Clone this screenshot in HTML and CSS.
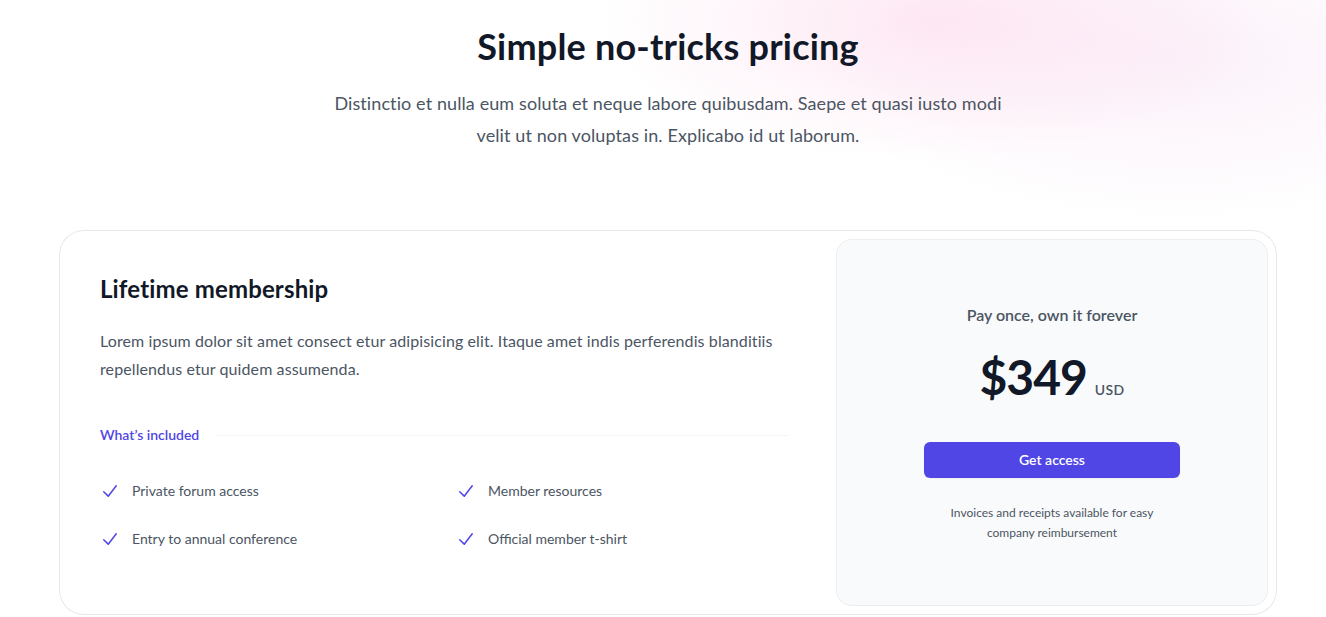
FILE: index.html
```html
<!DOCTYPE html>
<html lang="en">
<head>
<meta charset="utf-8">
<title>Pricing</title>
<link rel="stylesheet" href="styles.css">
</head>
<body>
<div class="page">
  <header class="intro">
    <h2 class="title">Simple no-tricks pricing</h2>
    <p class="lead">Distinctio et nulla eum soluta et neque labore quibusdam. Saepe et quasi iusto modi velit ut non voluptas in. Explicabo id ut laborum.</p>
  </header>
  <div class="card">
    <div class="details">
      <h3 class="plan">Lifetime membership</h3>
      <p class="desc">Lorem ipsum dolor sit amet consect etur adipisicing elit. Itaque amet indis perferendis blanditiis repellendus etur quidem assumenda.</p>
      <div class="included">
        <h4 class="included-label">What’s included</h4>
        <div class="rule"></div>
      </div>
      <ul class="features">
        <li class="feature"><svg class="check" viewBox="0 0 20 20" aria-hidden="true"><path fill-rule="evenodd" d="M16.704 4.153a.75.75 0 01.143 1.052l-8 10.5a.75.75 0 01-1.127.075l-4.5-4.5a.75.75 0 011.06-1.06l3.894 3.893 7.48-9.817a.75.75 0 011.05-.143z" clip-rule="evenodd"/></svg>Private forum access</li>
        <li class="feature"><svg class="check" viewBox="0 0 20 20" aria-hidden="true"><path fill-rule="evenodd" d="M16.704 4.153a.75.75 0 01.143 1.052l-8 10.5a.75.75 0 01-1.127.075l-4.5-4.5a.75.75 0 011.06-1.06l3.894 3.893 7.48-9.817a.75.75 0 011.05-.143z" clip-rule="evenodd"/></svg>Member resources</li>
        <li class="feature"><svg class="check" viewBox="0 0 20 20" aria-hidden="true"><path fill-rule="evenodd" d="M16.704 4.153a.75.75 0 01.143 1.052l-8 10.5a.75.75 0 01-1.127.075l-4.5-4.5a.75.75 0 011.06-1.06l3.894 3.893 7.48-9.817a.75.75 0 011.05-.143z" clip-rule="evenodd"/></svg>Entry to annual conference</li>
        <li class="feature"><svg class="check" viewBox="0 0 20 20" aria-hidden="true"><path fill-rule="evenodd" d="M16.704 4.153a.75.75 0 01.143 1.052l-8 10.5a.75.75 0 01-1.127.075l-4.5-4.5a.75.75 0 011.06-1.06l3.894 3.893 7.48-9.817a.75.75 0 011.05-.143z" clip-rule="evenodd"/></svg>Official member t-shirt</li>
      </ul>
    </div>
    <div class="aside">
      <div class="price-box">
        <div class="price-inner">
          <p class="price-label">Pay once, own it forever</p>
          <p class="price"><span class="amount">$349</span><span class="currency">USD</span></p>
          <a href="#" class="cta">Get access</a>
          <p class="note">Invoices and receipts available for easy company reimbursement</p>
        </div>
      </div>
    </div>
  </div>
</div>
</body>
</html>
```

FILE: styles.css
```css
* { box-sizing: border-box; }
html, body { margin: 0; padding: 0; }
body {
  font-family: "Segoe UI", Lato, "Noto Sans", sans-serif;
  color: #111827;
  background:
    radial-gradient(ellipse 330px 140px at 930px 20px, rgba(252, 205, 230, 0.45), rgba(252, 205, 230, 0) 100%),
    radial-gradient(ellipse 360px 160px at 1180px 60px, rgba(245, 215, 240, 0.35), rgba(245, 215, 240, 0) 100%),
    #ffffff;
  min-height: 617px;
}
.page {
  padding: 26px 50px 0 60px;
}
.intro {
  max-width: 672px;
  margin: 0 auto;
  text-align: center;
}
.title {
  margin: 0;
  font-size: 36px;
  line-height: 40px;
  font-weight: 700;
  letter-spacing: 0.2px;
  color: #111827;
}
.lead {
  margin: 21px 0 0;
  font-size: 18px;
  line-height: 32px;
  color: #4b5563;
  letter-spacing: 0.1px;
}
.card {
  margin-top: 80px;
  display: flex;
  border-radius: 24px;
  box-shadow: 0 0 0 1px #e5e7eb;
}
.details {
  flex: 1 1 auto;
  padding: 40px;
}
.plan {
  margin: 0;
  padding-top: 2px;
  font-size: 24px;
  line-height: 32px;
  font-weight: 700;
  letter-spacing: 0.15px;
  color: #111827;
}
.desc {
  margin: 22px 0 0;
  font-size: 16px;
  line-height: 28px;
  color: #4b5563;
  letter-spacing: 0.1px;
}
.included {
  margin-top: 40px;
  display: flex;
  align-items: center;
  gap: 16px;
}
.included-label {
  margin: 0;
  flex: none;
  font-size: 14px;
  line-height: 24px;
  font-weight: 600;
  color: #4f46e5;
}
.rule {
  flex: 1 1 auto;
  height: 1px;
  background: #f3f4f6;
}
.features {
  list-style: none;
  margin: 32px 0 0;
  padding: 0;
  display: grid;
  grid-template-columns: 1fr 1fr;
  gap: 24px;
  font-size: 14px;
  line-height: 24px;
  color: #4b5563;
}
.feature {
  display: flex;
  gap: 12px;
}
.check {
  flex: none;
  width: 20px;
  height: 24px;
  fill: #4f46e5;
}
.aside {
  flex: none;
  width: 448px;
  padding: 8px;
}
.price-box {
  height: 100%;
  border-radius: 16px;
  background: #f9fafb;
  box-shadow: inset 0 0 0 1px rgba(17, 24, 39, 0.05);
  padding: 64px 0 63px;
  text-align: center;
  display: flex;
  flex-direction: column;
  justify-content: center;
}
.price-inner {
  margin: 0 auto;
  width: 320px;
  padding: 0 32px;
}
.price-label {
  margin: 0;
  font-size: 16px;
  line-height: 24px;
  font-weight: 600;
  color: #4b5563;
}
.price {
  margin: 26px 0 0;
  display: flex;
  align-items: baseline;
  justify-content: center;
  gap: 8px;
}
.amount {
  font-size: 48px;
  line-height: 48px;
  font-weight: 700;
  letter-spacing: -1px;
  color: #111827;
}
.currency {
  font-size: 14px;
  line-height: 24px;
  font-weight: 600;
  letter-spacing: 0.35px;
  color: #4b5563;
}
.cta {
  margin-top: 40px;
  display: block;
  width: 100%;
  border-radius: 6px;
  background: #4f46e5;
  padding: 8px 12px;
  font-size: 14px;
  line-height: 20px;
  font-weight: 600;
  color: #ffffff;
  text-decoration: none;
  box-shadow: 0 1px 2px rgba(0, 0, 0, 0.05);
}
.note {
  margin: 25px auto 0;
  max-width: 225px;
  font-size: 12px;
  line-height: 20px;
  color: #4b5563;
}
```
